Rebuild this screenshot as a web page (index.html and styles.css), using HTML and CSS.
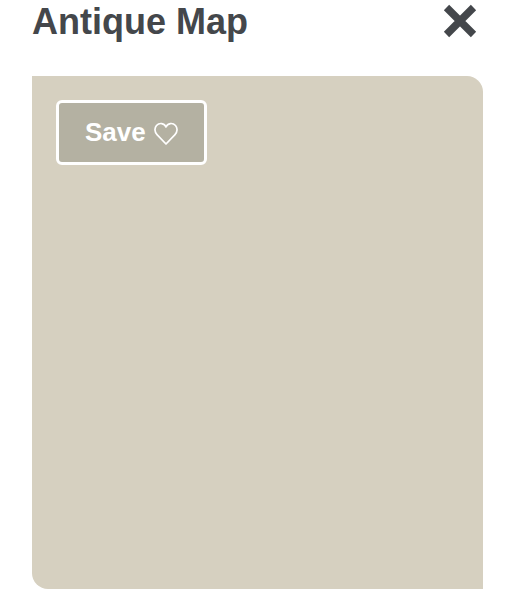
FILE: index.html
```
<!DOCTYPE html>
<html lang="en">
<head>
  <meta charset="UTF-8">
  <meta name="viewport" content="width=device-width, initial-scale=1">
  <title>Antique Map</title>
  <link rel="stylesheet" href="styles.css">
</head>
<body>

<header class="modal-header">
  <h1>Antique Map</h1>
  <button type="button" class="close-btn" aria-label="Close">
    <svg viewBox="0 0 34 34" width="34" height="34" aria-hidden="true">
      <path d="M3.500 3.500 L30.500 30.500 M30.500 3.500 L3.500 30.500" fill="none" stroke="currentColor" stroke-width="7.500"/>
    </svg>
  </button>
</header>

<main class="swatch">
  <button type="button" class="save-btn">
    <span>Save</span>
    <svg viewBox="0 0 24 24" width="24" height="24" aria-hidden="true">
      <path d="M12 23 L3 13.600 C0.500 11 0.300 7 2.500 4.500 C5.200 1.500 10.500 1.800 12 6 C13.500 1.800 18.800 1.500 21.500 4.500 C23.700 7 23.500 11 21 13.600 Z" fill="none" stroke="currentColor" stroke-width="1.700" stroke-linejoin="round"/>
    </svg>
  </button>
</main>

</body>
</html>
```

FILE: styles.css
```
* {
  box-sizing: border-box;
}

body {
  display: flex;
  flex-direction: column;
  min-height: 100vh;
  margin: 0;
  padding: 0 31px 11px 32px;
  background: #fff;
  color: #44474b;
  font-family: "Liberation Sans", Arial, sans-serif;
}

.modal-header {
  display: flex;
  align-items: flex-start;
  justify-content: space-between;
  padding: 0 6px 32px 0;
}

h1 {
  margin: 0;
  font-size: 36px;
  line-height: 44px;
}

.close-btn {
  margin: 4px 0 0;
  padding: 0;
  border: none;
  background: none;
  color: inherit;
  cursor: pointer;
}

.close-btn svg,
.save-btn svg {
  display: block;
}

.swatch {
  flex: 1;
  padding: 24px;
  background: #d6d0c0;
  border-radius: 0 16px 0 16px;
}

.save-btn {
  display: flex;
  align-items: center;
  gap: 8px;
  height: 65px;
  padding: 0 26px;
  border: 3px solid #fff;
  border-radius: 6px;
  background: #b4b1a2;
  color: #fff;
  font-family: inherit;
  font-size: 26px;
  font-weight: bold;
  cursor: pointer;
}
```
